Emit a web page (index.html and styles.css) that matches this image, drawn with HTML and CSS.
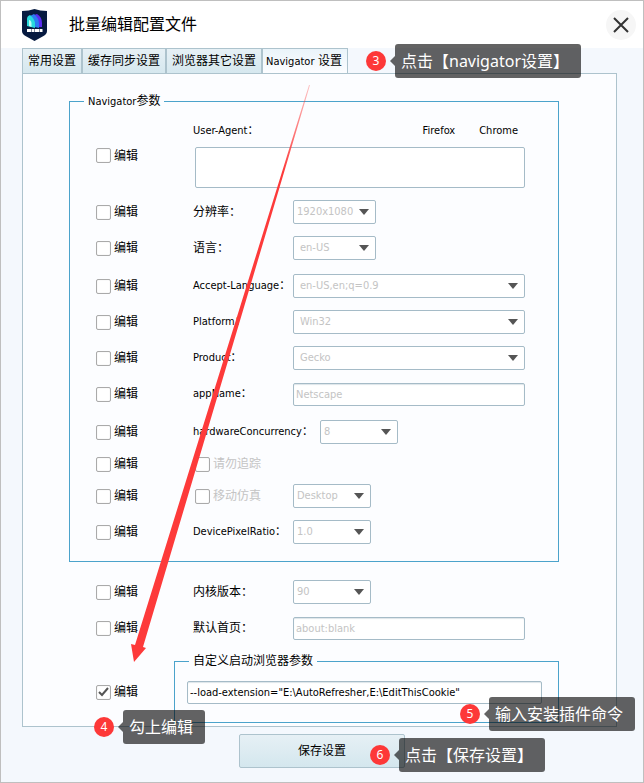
FILE: index.html
```html
<!DOCTYPE html>
<html lang="zh-CN">

<head>
    <title>批量编辑配置文件</title>
    <meta charset="utf-8">
    <link rel="stylesheet" href="styles.css">
</head>

<body>
    <div class="window">
        <header class="titlebar">
            <svg class="logo" width="25" height="32" viewBox="0 0 25 32">
                <path fill="#061a40" d="M0 2Q7 2 12.500 0Q18 2 25 2V22Q25 25 21.500 27L12.500 32L3.500 27Q0 25 0 22Z" />
                <path fill="#5a2df0" d="M12 6L15 5Q20 8 20 14V18L17 18Z" />
                <path fill="#2b7cf0" d="M8 7L12 5Q17 9 17 15V19L13 18Z" />
                <path fill="#27d9dc" d="M5 10Q5 7 8 6Q13 10 13 15V19L5 17Z" />
                <path fill="#b8fff5" d="M7 11Q9 11 9.500 14V18L7 17Z" />
                <path stroke="#fff" stroke-width="3" stroke-dasharray="4 .5 3 .5" d="M5 21.500H21" />
            </svg>
            <h1>批量编辑配置文件</h1>
            <button class="close" aria-label="关闭">
                <svg width="16" height="16" viewBox="0 0 16 16">
                    <path d="M1 1L15 15M15 1L1 15" stroke="#333" stroke-width="2" />
                </svg>
            </button>
        </header>

        <nav class="tabs">
            <button>常用设置</button>
            <button>缓存同步设置</button>
            <button>浏览器其它设置</button>
            <button class="active"><span class="latin">Navigator</span> 设置</button>
        </nav>

        <main class="panel">
            <fieldset class="navigator">
                <legend><span class="latin">Navigator</span>参数</legend>
                <div class="rows">
                    <div class="row agent">
                        <label class="edit"><input type="checkbox">编辑</label>
                        <div class="agentBox">
                            <div class="agentHead">
                                <label class="latin" for="userAgent">User-Agent：</label>
                                <button class="latin">Firefox</button>
                                <button class="latin">Chrome</button>
                            </div>
                            <textarea id="userAgent"></textarea>
                        </div>
                    </div>
                    <div class="row">
                        <label class="edit"><input type="checkbox">编辑</label>
                        <label for="resolution">分辨率：</label>
                        <select id="resolution" class="medium tight" disabled><option>1920x1080</option></select>
                    </div>
                    <div class="row">
                        <label class="edit"><input type="checkbox">编辑</label>
                        <label for="language">语言：</label>
                        <select id="language" class="medium" disabled><option>en-US</option></select>
                    </div>
                    <div class="row spaced">
                        <label class="edit"><input type="checkbox">编辑</label>
                        <label class="latin" for="acceptLanguage">Accept-Language：</label>
                        <select id="acceptLanguage" disabled><option>en-US,en;q=0.9</option></select>
                    </div>
                    <div class="row">
                        <label class="edit"><input type="checkbox">编辑</label>
                        <label class="latin" for="platform">Platform：</label>
                        <select id="platform" disabled><option>Win32</option></select>
                    </div>
                    <div class="row">
                        <label class="edit"><input type="checkbox">编辑</label>
                        <label class="latin" for="product">Product：</label>
                        <select id="product" disabled><option>Gecko</option></select>
                    </div>
                    <div class="row">
                        <label class="edit"><input type="checkbox">编辑</label>
                        <label class="latin" for="appName">appName：</label>
                        <input type="text" id="appName" value="Netscape" disabled>
                    </div>
                    <div class="row wideLabel spaced">
                        <label class="edit"><input type="checkbox">编辑</label>
                        <label class="latin" for="hardware">hardwareConcurrency：</label>
                        <select id="hardware" class="small tight" disabled><option>8</option></select>
                    </div>
                    <div class="row low">
                        <label class="edit"><input type="checkbox">编辑</label>
                        <label class="edit off"><input type="checkbox" disabled>请勿追踪</label>
                    </div>
                    <div class="row">
                        <label class="edit"><input type="checkbox">编辑</label>
                        <label class="edit off"><input type="checkbox" disabled>移动仿真</label>
                        <select class="small tight" aria-label="移动仿真" disabled><option>Desktop</option></select>
                    </div>
                    <div class="row">
                        <label class="edit"><input type="checkbox">编辑</label>
                        <label class="latin" for="ratio">DevicePixelRatio：</label>
                        <select id="ratio" class="small tight" disabled><option>1.0</option></select>
                    </div>
                </div>
            </fieldset>

            <div class="rows outer">
                <div class="row">
                    <label class="edit"><input type="checkbox">编辑</label>
                    <label for="kernel">内核版本：</label>
                    <select id="kernel" class="small tight" disabled><option>90</option></select>
                </div>
                <div class="row">
                    <label class="edit"><input type="checkbox">编辑</label>
                    <label for="homepage">默认首页：</label>
                    <input type="text" id="homepage" value="about:blank" disabled>
                </div>
            </div>

            <div class="custom">
                <label class="edit"><input type="checkbox" checked>编辑</label>
                <fieldset>
                    <legend>自定义启动浏览器参数</legend>
                    <input type="text" aria-label="自定义启动浏览器参数" value='--load-extension="E:\AutoRefresher,E:\EditThisCookie"'>
                </fieldset>
            </div>
        </main>

        <footer>
            <button class="save">保存设置</button>
        </footer>

        <!-- Anleitung: Pfeil und nummerierte Hinweise -->
        <svg class="arrow" width="182" height="580" viewBox="0 0 182 580">
            <defs>
                <linearGradient id="fade" x1="0" y1="0" x2="0" y2="1">
                    <stop offset="0" stop-color="#fd3a3a" stop-opacity=".3" />
                    <stop offset=".15" stop-color="#fd3a3a" />
                </linearGradient>
            </defs>
            <path fill="url(#fade)" d="M179 1L180 1L13 563L16 564L4 578L1 560L5 561Z" />
        </svg>
        <div class="hint hint3"><b>3</b><span>点击【navigator设置】</span></div>
        <div class="hint hint4"><b>4</b><span>勾上编辑</span></div>
        <div class="hint hint5"><b>5</b><span>输入安装插件命令</span></div>
        <div class="hint hint6"><b>6</b><span>点击【保存设置】</span></div>
    </div>
</body>

</html>
```
FILE: styles.css
```css
* {
    box-sizing: border-box;
}

body {
    margin: 0;
    font-family: "DejaVu Sans Condensed", "Noto Sans CJK SC", sans-serif;
    font-size: 12px;
    line-height: 16px;
    color: #000;
}

button,
input,
select,
textarea {
    margin: 0;
    font: inherit;
    color: inherit;
}

.latin {
    font-size: 11px;
}

.window {
    position: relative;
    min-height: 100vh;
    background-color: #f4f8fd;
    border: 1px solid #bfbfbf;
}

/* Titelleiste */
.titlebar {
    display: flex;
    align-items: center;
    height: 47px;
    padding: 0 7px 0 21px;
    background-color: #fff;
}

.titlebar h1 {
    flex: 1;
    margin: 0 0 0 22px;
    font-size: 16px;
    font-weight: normal;
    line-height: 24px;
}

.close {
    display: flex;
    align-items: center;
    justify-content: center;
    width: 30px;
    height: 30px;
    padding: 0;
    border: none;
    border-radius: 50%;
    background-color: #f6f6f6;
}

/* Tabs */
.tabs {
    display: flex;
    padding-left: 21px;
}

.tabs button {
    height: 25px;
    padding: 0 4px;
    border: 1px solid #adc3cd;
    border-bottom: none;
    margin-right: -1px;
    background: linear-gradient(#e6f0f5, #d6e8ef);
    white-space: nowrap;
}

.tabs button:not(.active) {
    padding: 0 5px;
    border-right-width: 2px;
}

.tabs .active {
    padding: 0 5px 0 3px;
    background: linear-gradient(#eaf4fa, #fcfdff);
}

.panel {
    margin: 0 26px 0 21px;
    padding: 19px 0 3px;
    background-color: #fcfdff;
    border: 1px solid #adc3cd;
}

fieldset {
    min-width: 0;
    margin: 0;
    padding: 0;
    border: 1px solid #4ba3cb;
}

legend {
    margin-left: 14px;
    padding: 0 4px;
}

.navigator {
    margin: 0 57px 0 46px;
}

/* Zeilen */
.rows {
    display: flex;
    flex-direction: column;
    gap: 12px;
    padding: 13px 33px 17px 26px;
}

.outer {
    padding: 18px 91px 13px 73px;
}

.row {
    display: grid;
    grid-template-columns: 97px 100px 1fr;
    align-items: center;
    min-height: 24px;
}

.row label {
    white-space: nowrap;
}

.wideLabel {
    grid-template-columns: 97px 127px 1fr;
}

.spaced {
    margin-top: 2px;
}

.low {
    min-height: 16px;
}

.agent {
    grid-template-columns: 97px 1fr;
}

.agentBox {
    display: flex;
    flex-direction: column;
    gap: 8px;
}

.agentHead {
    display: flex;
    gap: 24px;
    padding-right: 7px;
}

.agentHead label {
    flex: 1;
}

.agentHead button {
    padding: 0;
    border: none;
    background: none;
}

.agentBox textarea {
    width: auto;
    margin-left: 2px;
}

.edit {
    display: flex;
    align-items: center;
    gap: 3px;
}

.off {
    color: #c4c4c4;
}

input[type=checkbox] {
    appearance: none;
    width: 15px;
    height: 15px;
    border: 1px solid #aaa;
    border-radius: 2px;
    background: #fff center no-repeat;
    box-shadow: inset 0 0 1px #ccc;
}

.off input[type=checkbox] {
    margin-left: 2px;
}

input[type=checkbox]:checked {
    background-image: url("data:image/svg+xml,%3Csvg xmlns='http://www.w3.org/2000/svg' width='11' height='10'%3E%3Cpath d='M1 5L4 8L10 1' fill='none' stroke='%23555' stroke-width='2'/%3E%3C/svg%3E");
}

input[type=text],
select,
textarea {
    width: 100%;
    min-width: 0;
    border: 1px solid #a5bbc7;
    border-radius: 2px;
    background-color: #fff;
    font-size: 11px;
}

input[type=text] {
    height: 23px;
    padding: 0 2px;
    box-shadow: inset 0 1px 1px #dde5e9;
}

select {
    appearance: none;
    height: 24px;
    padding: 0 22px 0 6px;
    background-image: url("data:image/svg+xml,%3Csvg xmlns='http://www.w3.org/2000/svg' width='10' height='6'%3E%3Cpath d='M0 0H10L5 6Z' fill='%23555'/%3E%3C/svg%3E");
    background-repeat: no-repeat;
    background-position: right 6px center;
}

input[type=text]:disabled,
select:disabled {
    color: #c4c4c4;
    opacity: 1;
}

textarea {
    display: block;
    height: 41px;
    resize: none;
}

select.medium {
    width: 83px;
}

select.small {
    width: 78px;
}

select.tight {
    padding: 0 18px 0 3px;
}

.custom {
    display: grid;
    grid-template-columns: 78px 1fr;
    align-items: center;
    padding: 0 57px 0 73px;
}

.custom .edit {
    padding-top: 8px;
}

.custom fieldset {
    padding: 12px 16px 18px 12px;
}

.custom legend {
    margin-left: 2px;
}

.custom input[type=text] {
    display: block;
}

footer {
    display: flex;
    justify-content: center;
    padding: 7px 0 13px;
}

.save {
    width: 166px;
    height: 34px;
    border: 1px solid #adc3cd;
    border-radius: 2px;
    background: linear-gradient(#e6f0f5, #d4e7ee);
}

/* Hinweise liegen über dem Fenster */
.arrow {
    position: absolute;
    left: 129px;
    top: 83px;
    pointer-events: none;
}

.hint {
    position: absolute;
    display: flex;
    align-items: center;
    gap: 9px;
    font-family: "Noto Sans", "Noto Sans CJK SC", sans-serif;
    white-space: nowrap;
}

.hint b {
    width: 20px;
    height: 20px;
    border-radius: 50%;
    background-color: #fd3838;
    color: #fff;
    font-size: 12px;
    font-weight: normal;
    line-height: 20px;
    text-align: center;
}

.hint span {
    position: relative;
    height: 34px;
    padding: 0 12px 0 6px;
    border-radius: 3px;
    background-color: rgba(0, 0, 0, .61);
    color: #fff;
    font-size: 16px;
    line-height: 34px;
}

.hint span::before {
    content: "";
    position: absolute;
    left: -5px;
    top: 12px;
    border: 5px solid transparent;
    border-left: none;
    border-right-color: rgba(0, 0, 0, .61);
}

.hint3 {
    left: 365px;
    top: 43px;
}

.hint4 {
    left: 93px;
    top: 709px;
}

.hint5 {
    left: 459px;
    top: 696px;
}

.hint6 {
    left: 369px;
    top: 737px;
}
```
